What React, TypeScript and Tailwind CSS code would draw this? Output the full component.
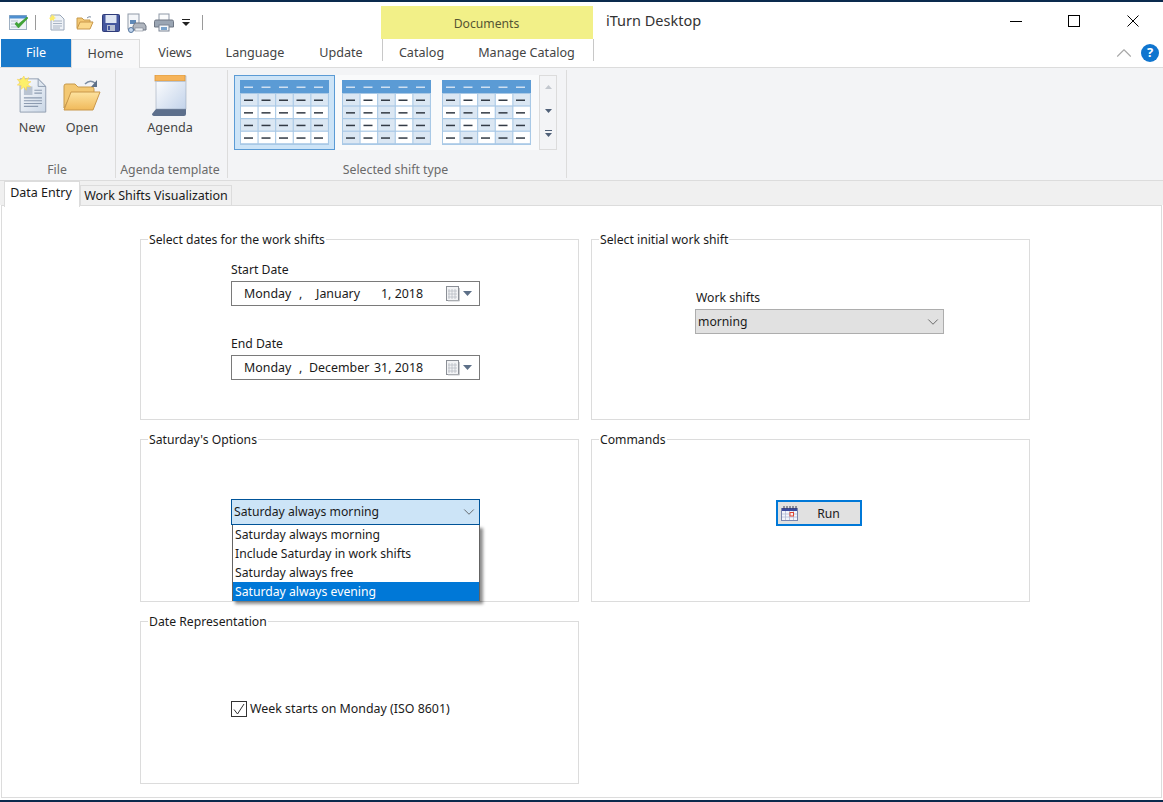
import type { ReactNode } from "react";
import { ChevronDown, ChevronUp } from "lucide-react";

const ribbonTabs = [
  { label: "Views", width: "w-[70px]" },
  { label: "Language", width: "w-[90px]" },
  { label: "Update", width: "w-[82px]" },
];

function NewIcon({ className }: { className: string }) {
  return (
    <svg viewBox="0 0 32 40" className={className}>
      <defs>
        <linearGradient id="newPage" x1="0" y1="0" x2="1" y2="1">
          <stop offset="0" stopColor="#ffffff" />
          <stop offset="1" stopColor="#c9d6e6" />
        </linearGradient>
      </defs>
      <path d="M4 3h19l8 8v27H4z" fill="url(#newPage)" stroke="#8f9db0" />
      <path d="M23 3v8h8z" fill="#dfe7f0" stroke="#8f9db0" />
      <rect x="8" y="11" width="9" height="9" fill="#b9c4d2" />
      <path d="M19 15h8M19 18h8M8 23h19M8 26h19M8 29h19M8 32h15" stroke="#8c9bb0" strokeWidth="1.2" />
      <path
        d="M8 0l1.5 4L13 1.500l-1.500 4 4 .5-3.500 2.500 3 3-4-.5-.5 4-2.500-3.500L5 14l.5-4-4.500-.5L4 7 1 3.500l4 .5z"
        fill="#fdf06a"
        stroke="#f7c948"
        strokeWidth=".5"
      />
    </svg>
  );
}

function OpenIcon({ className }: { className: string }) {
  return (
    <svg viewBox="0 0 38 32" className={className}>
      <defs>
        <linearGradient id="openFront" x1="0" y1="0" x2="0" y2="1">
          <stop offset="0" stopColor="#fde3a0" />
          <stop offset="1" stopColor="#f0b95a" />
        </linearGradient>
      </defs>
      <path d="M1 29V7q0-2 2-2h9l3 3h14q2 0 2 2v4H9z" fill="#f3c873" stroke="#c79a4c" />
      <path d="M8 13h29L30 31H1z" fill="url(#openFront)" stroke="#c9974a" />
      <path d="M22 5q5-5 10-1" fill="none" stroke="#7d8ea3" strokeWidth="1.600" />
      <path d="M34 1v7h-6z" fill="#5d7088" />
    </svg>
  );
}

function AgendaIcon({ className }: { className: string }) {
  return (
    <svg viewBox="0 0 36 41" className={className}>
      <defs>
        <linearGradient id="agendaPage" x1="0" y1="0" x2="1" y2="1">
          <stop offset="0" stopColor="#ffffff" />
          <stop offset="1" stopColor="#c3d3ea" />
        </linearGradient>
      </defs>
      <path d="M5 34 1 39q0 2 3 2h29q2 0 2-2V1h-3v33z" fill="#5d6f8c" />
      <rect x="5" y="1" width="30" height="33" fill="url(#agendaPage)" stroke="#8f9db0" strokeWidth=".5" />
      <rect x="4" y="0" width="30" height="6" fill="#f6b45a" stroke="#d9963c" strokeWidth=".8" />
      <rect x="4" y="6" width="30" height="1" fill="#b9c4d2" />
    </svg>
  );
}

function ChecklistIcon() {
  return (
    <svg viewBox="0 0 20 16" className="h-4 w-5">
      <rect x=".5" y=".5" width="17" height="14" fill="#eef3f8" stroke="#9fb0c2" />
      <rect x=".5" y=".5" width="17" height="3" fill="#4f8fd0" />
      <path d="M2 6h7M2 9h5M2 12h7" stroke="#b4c0cc" />
      <path d="M6 9l3.500 4L19 3l-1-1-8.500 7L7.500 7z" fill="#3fa535" stroke="#2b8a25" strokeWidth=".5" />
    </svg>
  );
}

function SaveIcon() {
  return (
    <svg viewBox="0 0 18 18" className="h-[18px] w-[18px]">
      <rect x=".5" y=".5" width="17" height="17" rx="1" fill="#45579e" stroke="#2f3c7a" />
      <rect x="3.500" y="1" width="11" height="8" fill="#dfe6f3" />
      <rect x="5" y="11" width="8" height="6" fill="#b7bfd2" />
      <rect x="6" y="12" width="2" height="4" fill="#45579e" />
    </svg>
  );
}

function PreviewIcon() {
  return (
    <svg viewBox="0 0 20 20" className="h-5 w-5">
      <rect x="1" y="1" width="11" height="15" fill="#f4f6f9" stroke="#8f99a8" />
      <rect x="3" y="7" width="6" height="4" fill="#5f89b8" />
      <path d="M8 10h9l2 3v4H6v-4z" fill="#b0b6bf" stroke="#6e7683" />
      <rect x="8" y="15" width="8" height="3" fill="#eef1f5" stroke="#6e7683" strokeWidth=".5" />
      <circle cx="4" cy="17" r="2.500" fill="#c2d6ee" stroke="#56779f" />
    </svg>
  );
}

function PrintIcon() {
  return (
    <svg viewBox="0 0 20 19" className="h-[19px] w-5">
      <rect x="5" y="1" width="10" height="7" fill="#fbfcfd" stroke="#8f99a8" />
      <path d="M2 7h16q1.500 0 1.500 1.500V14h-19V8.500Q.5 7 2 7z" fill="#9aa5b3" stroke="#6e7683" />
      <rect x="5" y="12" width="10" height="6" fill="#f6f8fa" stroke="#7b8494" />
      <rect x="7" y="14" width="6" height="3" fill="#7aa3cc" />
    </svg>
  );
}

function SmallDocIcon() {
  return (
    <svg viewBox="0 0 16 17" className="h-[17px] w-4">
      <path d="M2 1h9l4 4v11H2z" fill="#eef2f7" stroke="#9aa7b8" />
      <path d="M4 7h9M4 9.500h9M4 12h9M4 14h7" stroke="#a8b4c3" />
      <path d="M3 0l1 2 2-1-1 2 2 1-2 1 0 2-2-1-2 1 0-2-1-1 2-1z" fill="#fdeb6a" />
    </svg>
  );
}

function SmallFolderIcon() {
  return (
    <svg viewBox="0 0 18 15" className="h-[15px] w-[18px]">
      <path d="M1 13V3h5l2 2h6v3" fill="#f3c873" stroke="#c79a4c" />
      <path d="M4 7h13l-3 7H1z" fill="#fbd98b" stroke="#c9974a" />
      <path d="M11 3q2-2 4-1" fill="none" stroke="#7d8ea3" />
    </svg>
  );
}

function CalendarIcon() {
  return (
    <svg viewBox="0 0 14 16" className="h-4 w-[14px]">
      <rect x=".5" y=".5" width="12" height="14" fill="#f2f3f5" stroke="#8b8f96" />
      <path d="M3 3v10M6 3v10M9 3v10M2 5h9M2 8h9M2 11h9" stroke="#b9bdc4" strokeWidth=".8" />
      <path d="M13.500 2v13H2" fill="none" stroke="#c8cacd" />
    </svg>
  );
}

function RunIcon() {
  return (
    <svg viewBox="0 0 17 15" className="h-[15px] w-[17px]">
      <rect x=".5" y="2.500" width="16" height="12" fill="#f3f5fb" stroke="#7b86ad" />
      <rect x="1" y="2" width="15" height="3" fill="#3b4a9c" />
      <path d="M3 0v3M6 0v3M9 0v3M12 0v3M15 0v3" stroke="#3a3f55" />
      <path d="M1 8h15M1 11h15M4.500 5v9M8.500 5v9M12.500 5v9" stroke="#b3bbd6" strokeWidth=".8" />
      <rect x="9" y="6.500" width="3.500" height="3.500" fill="#f2f3f8" stroke="#e0442e" />
    </svg>
  );
}

const blue = "#dbe7f3";
const white = "#ffffff";

function tableCell(style: number, row: number, col: number) {
  if (style === 0) return row % 2 === 0 ? blue : white;
  if (style === 1) return col % 2 === 0 ? blue : white;
  return (row + col) % 2 === 0 ? blue : white;
}

// gallery thumbnail: blue header plus four rows of five cells with dashes
function TableThumb({ kind }: { kind: number }) {
  const cols = [0, 1, 2, 3, 4];
  const rows = [0, 1, 2, 3];
  return (
    <svg viewBox="0 0 89 65" className="h-[65px] w-[89px]">
      <rect width="89" height="65" fill="#a9c9e6" />
      <rect width="89" height="13" fill="#5b9bd5" />
      {cols.map((c) => (
        <rect key={c} x={4 + c * 17.500} y="6.500" width="9" height="1.500" fill="#cfe0f1" />
      ))}
      {rows.map((r) =>
        cols.map((c) => (
          <g key={`${r}-${c}`}>
            <rect
              x={1 + c * 17.600}
              y={14 + r * 12.600}
              width="16.500"
              height="11.400"
              fill={tableCell(kind, r, c)}
            />
            <rect x={4 + c * 17.500} y={19.500 + r * 12.600} width="9" height="1.500" fill="#333b45" />
          </g>
        )),
      )}
    </svg>
  );
}

function GroupBox({
  title,
  className,
  children,
}: {
  title: string;
  className?: string;
  children?: ReactNode;
}) {
  return (
    <div className={`relative border border-[#dcdcdc] ${className ?? ""}`}>
      <span className="absolute left-[7px] top-[-9px] bg-white px-px text-[12.200px] leading-[17px] text-[#1a1a1a]">
        {title}
      </span>
      {children}
    </div>
  );
}

function DatePicker({ children }: { children: ReactNode }) {
  return (
    <div className="flex h-[25px] w-[249px] items-center border border-[#7a7a7a] pl-[12px] text-[12.400px] text-[#1a1a1a]">
      <div className="flex flex-1 items-center pt-[2px]">{children}</div>
      <CalendarIcon />
      <svg viewBox="0 0 9 5" className="ml-[3px] mr-[7px] h-[5px] w-[9px]">
        <path d="M0 0h9L4.500 5z" fill="#5d7088" />
      </svg>
    </div>
  );
}

function RibbonButton({ icon, label, className }: { icon: ReactNode; label: string; className: string }) {
  return (
    <div className={`flex flex-col items-center ${className}`}>
      <div className="flex h-[42px] items-center">{icon}</div>
      <span className="mt-[3px] text-[12.600px] leading-[18px] text-[#444444]">{label}</span>
    </div>
  );
}

export default function App() {
  return (
    <div className="flex h-[802px] w-[1163px] flex-col overflow-hidden bg-white font-['Noto_Sans',sans-serif]">
      <div className="h-[2px] bg-[#0a2a4d]" />

      {/* quick access toolbar and window title */}
      <div className="flex h-[37px] items-stretch">
        <div className="flex w-[381px] items-center pl-[9px] pt-[4px]">
          <ChecklistIcon />
          <div className="ml-[6px] h-[15px] w-px bg-[#9a9a9a]" />
          <div className="ml-[13px]">
            <SmallDocIcon />
          </div>
          <div className="ml-[11px]">
            <SmallFolderIcon />
          </div>
          <div className="ml-[8px]">
            <SaveIcon />
          </div>
          <div className="ml-[7px]">
            <PreviewIcon />
          </div>
          <div className="ml-[7px]">
            <PrintIcon />
          </div>
          <svg viewBox="0 0 8 7" className="ml-[8px] h-[7px] w-[8px]">
            <path d="M0 0h8v1H0zM0 3h8L4 7z" fill="#222222" />
          </svg>
          <div className="ml-[12px] h-[15px] w-px bg-[#9a9a9a]" />
        </div>
        <div className="mt-[4px] flex w-[212px] items-center justify-center bg-[#f2f088] pr-px pt-[4px] text-[12.200px] text-[#555533]">
          Documents
        </div>
        <div className="flex flex-1 items-center pl-[13px] text-[14.500px] text-[#333333]">iTurn Desktop</div>
        <div className="flex items-center pr-[24px]">
          <svg viewBox="0 0 12 12" className="h-3 w-3">
            <path d="M0 6.500h12" stroke="#000000" />
          </svg>
          <svg viewBox="0 0 12 12" className="ml-[46px] h-3 w-3">
            <rect x=".5" y=".5" width="11" height="11" fill="none" stroke="#000000" />
          </svg>
          <svg viewBox="0 0 12 12" className="ml-[47px] h-3 w-3">
            <path d="M.5.5l11 11M11.500.5l-11 11" stroke="#000000" />
          </svg>
        </div>
      </div>

      {/* ribbon tabs */}
      <div className="flex h-[29px] border-b border-[#dcdcdc] pl-px text-[12.600px] text-[#444444]">
        <div className="flex w-[70px] items-center justify-center bg-[#1979ca] text-white">File</div>
        <div className="mb-[-1px] flex w-[69px] items-center justify-center border-x border-t border-[#dcdcdc] bg-[#f8f8f9]">
          Home
        </div>
        {ribbonTabs.map((t) => (
          <div key={t.label} className={`flex items-center justify-center ${t.width}`}>
            {t.label}
          </div>
        ))}
        <div className="mb-[6px] flex w-[212px] border-x border-[#c8c8c8]">
          <div className="flex w-[77px] items-center justify-center pt-[6px]">Catalog</div>
          <div className="flex flex-1 items-center justify-center pt-[6px]">Manage Catalog</div>
        </div>
        <div className="flex flex-1 items-center justify-end pr-[4px]">
          <ChevronUp size={26} strokeWidth={1} className="mr-[4px] text-[#a8a8a8]" />
          <div className="flex h-[18px] w-[18px] items-center justify-center rounded-full bg-[#0f75cf] text-[13px] font-bold text-white">
            ?
          </div>
        </div>
      </div>

      {/* ribbon body */}
      <div className="flex h-[113px] border-b border-[#dcdcdc] bg-[#f3f4f6] pb-[2px] pt-[2px]">
        <div className="flex w-[116px] flex-col border-r border-[#dcdcdc]">
          <div className="flex flex-1 pl-[9px] pt-[4px]">
            <RibbonButton className="w-[46px]" label="New" icon={<NewIcon className="mr-[2px] h-[38px] w-[31px]" />} />
            <RibbonButton className="w-[54px]" label="Open" icon={<OpenIcon className="h-8 w-[38px]" />} />
          </div>
          <div className="pr-px text-center text-[12.300px] leading-[16px] text-[#6a6a6a]">File</div>
        </div>
        <div className="flex w-[112px] flex-col border-r border-[#dcdcdc]">
          <div className="flex flex-1 justify-center pr-[3px] pt-[4px]">
            <RibbonButton className="w-[60px]" label="Agenda" icon={<AgendaIcon className="mr-[2px] h-[41px] w-9" />} />
          </div>
          <div className="pr-[3px] text-center text-[12.300px] leading-[16px] text-[#6a6a6a]">Agenda template</div>
        </div>
        <div className="flex w-[339px] flex-col border-r border-[#dcdcdc]">
          <div className="flex flex-1 pl-[6px] pt-[5px]">
            <div className="flex h-[75px] w-[305px] bg-[#f9fafb]">
              <div className="flex h-[75px] w-[101px] items-center justify-center border border-[#5b9bd5] bg-[#cde4f7]">
                <TableThumb kind={0} />
              </div>
              <div className="flex w-[101px] items-center justify-center pl-px">
                <TableThumb kind={1} />
              </div>
              <div className="flex w-[101px] items-center justify-center">
                <TableThumb kind={2} />
              </div>
            </div>
            <div className="flex h-[75px] w-[18px] flex-col items-center border border-[#dcdcdc] bg-[#f3f4f6]">
              <svg viewBox="0 0 7 4" className="mt-[9px] h-[4px] w-[7px]">
                <path d="M3.500 0 7 4H0z" fill="#c2c7ce" />
              </svg>
              <svg viewBox="0 0 7 4" className="mt-[20px] h-[4px] w-[7px]">
                <path d="M0 0h7L3.500 4z" fill="#4f6078" />
              </svg>
              <svg viewBox="0 0 7 7" className="mt-[17px] h-[7px] w-[7px]">
                <path d="M0 0h7v1H0zM0 3h7L3.500 7z" fill="#4f6078" />
              </svg>
            </div>
          </div>
          <div className="pr-[3px] text-center text-[12.300px] leading-[16px] text-[#6a6a6a]">Selected shift type</div>
        </div>
      </div>

      {/* document tabs */}
      <div className="flex h-[24px] bg-[#f0f0f0] pl-[4px] text-[12.500px] whitespace-nowrap text-[#1a1a1a]">
        <div className="z-10 flex h-[26px] w-[76px] items-center justify-center border-x border-t border-[#dcdcdc] bg-white pb-[2px] pr-[2px]">
          Data Entry
        </div>
        <div className="mt-[4px] flex h-[21px] w-[152px] items-center justify-center border border-[#dcdcdc] pt-px">
          Work Shifts Visualization
        </div>
      </div>

      {/* tab page */}
      <div className="mx-px h-[593px] border border-[#dcdcdc] bg-white pl-[138px] pt-[33px]">
        <div className="grid w-[890px] grid-cols-[439px_439px] grid-rows-[181px_163px_163px] gap-x-[12px] gap-y-[19px]">
          <GroupBox title="Select dates for the work shifts" className="pl-[90px] pt-[21px]">
            <div className="mb-[3px] pt-px text-[12.200px] leading-[16px] text-[#1a1a1a]">Start Date</div>
            <DatePicker>
              <span className="w-[55px]">Monday</span>
              <span className="w-[17px]">,</span>
              <span className="w-[65px]">January</span>
              <span>1, 2018</span>
            </DatePicker>
            <div className="mb-[3px] mt-[29px] pt-px text-[12.200px] leading-[16px] text-[#1a1a1a]">End Date</div>
            <DatePicker>
              <span className="w-[55px]">Monday</span>
              <span className="w-[10px]">,</span>
              <span className="w-[65px]">December</span>
              <span>31, 2018</span>
            </DatePicker>
          </GroupBox>

          <GroupBox title="Select initial work shift" className="pl-[103px] pt-[49px]">
            <div className="mb-[3px] pl-px pt-px text-[12.200px] leading-[16px] text-[#1a1a1a]">Work shifts</div>
            <div className="flex h-[25px] w-[249px] items-center justify-between border border-[#adadad] bg-[#e1e1e1] pl-[2px] pr-px text-[12.200px] text-[#1a1a1a]">
              <span className="pt-[2px]">morning</span>
              <ChevronDown size={18} strokeWidth={1} className="text-[#444444]" />
            </div>
          </GroupBox>

          <GroupBox title="Saturday's Options" className="pl-[90px] pt-[59px]">
            <div className="flex h-[26px] w-[249px] items-center justify-between border border-[#005499] bg-[#cce4f7] pl-[2px] pr-px text-[12.200px] text-[#1a1a1a]">
              Saturday always morning
              <ChevronDown size={18} strokeWidth={1} className="text-[#444444]" />
            </div>
            <div className="absolute left-[91px] top-[85px] z-10 w-[248px] border-x border-[#646464] bg-white text-[12.200px] leading-[19px] text-[#1a1a1a] shadow-[3px_3px_3px_rgba(0,0,0,0.45)]">
              <div className="pl-[2px]">Saturday always morning</div>
              <div className="pl-[2px]">Include Saturday in work shifts</div>
              <div className="pl-[2px]">Saturday always free</div>
              <div className="bg-[#0078d7] pl-[2px] text-white">Saturday always evening</div>
            </div>
          </GroupBox>

          <GroupBox title="Commands" className="pl-[184px] pt-[60px]">
            <div className="flex h-[26px] w-[86px] items-center border-2 border-[#0078d7] bg-[#e1e1e1] pl-[3px] text-[12.200px] text-[#1a1a1a]">
              <RunIcon />
              <span className="flex-1 pr-px pt-[2px] text-center">Run</span>
            </div>
          </GroupBox>

          <GroupBox title="Date Representation" className="pl-[90px] pt-[78px]">
            <div className="flex items-center text-[12.400px] text-[#1a1a1a]">
              <div className="flex h-[16px] w-[16px] items-center justify-center border border-[#333333]">
                <svg viewBox="0 0 12 12" className="h-3 w-3">
                  <path d="M1 6.500 4.500 11 11 1" fill="none" stroke="#333333" strokeWidth="1" />
                </svg>
              </div>
              <span className="ml-[3px]">Week starts on Monday (ISO 8601)</span>
            </div>
          </GroupBox>
        </div>
      </div>

      <div className="flex-1" />
      <div className="h-[2px] bg-[#0a2a4d]" />
    </div>
  );
}
